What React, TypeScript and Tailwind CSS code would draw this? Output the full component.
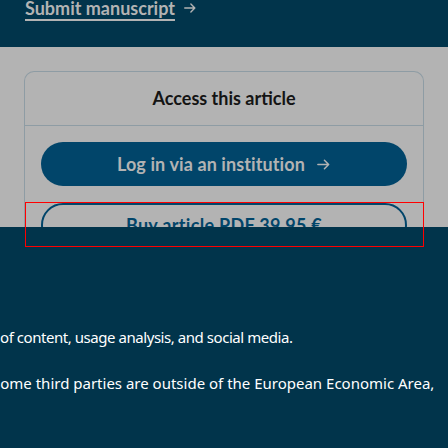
import React from "react";

function Arrow({ className }: { className?: string }) {
  return (
    <svg className={className} viewBox="0 0 16 16" fill="none" stroke="currentColor" strokeWidth="1.6" strokeLinecap="round" strokeLinejoin="round">
      <path d="M2 8h11M9 3.5 13.5 8 9 12.5" />
    </svg>
  );
}

export default function App() {
  return (
    <div className="w-[448px] h-[448px] overflow-hidden bg-[#01344b] relative" style={{ fontFamily: "Lato, 'Noto Sans', sans-serif" }}>
      <div className="h-[47px] bg-[#01344b] pl-[25px] flex items-start">
        <a className="flex items-center gap-[8px] text-[#b3b3b3] text-[18px] font-bold leading-none -mt-[1px]">
          <span className="underline decoration-[1.5px] underline-offset-[4px]">Submit manuscript</span>
          <Arrow className="w-[14px] h-[14px]" />
        </a>
      </div>
      <div className="h-[180px] bg-[#b3b3b3] px-[24px] pt-[24px] overflow-hidden">
        <div className="border border-b-0 border-[#8e9ca4] rounded-t-[10px] h-[200px]">
          <div className="h-[54px] border-b border-[#8e9ca4] flex items-center justify-center">
            <h2 className="text-[18px] font-bold text-[#141414]">Access this article</h2>
          </div>
          <div className="px-[16px] pt-[16px] flex flex-col gap-[17px]">
            <button className="h-[44px] rounded-full bg-[#01456a] text-[#b3b3b3] text-[18px] font-bold tracking-[0.1px] flex items-center justify-center gap-[11px]">
              <span>Log in via an institution</span>
              <Arrow className="w-[15px] h-[15px]" />
            </button>
            <button className="h-[44px] rounded-full border-2 border-[#01456a] text-[#01456a] text-[18px] font-bold tracking-[0.3px] flex items-center justify-center">
              Buy article PDF 39,95 €
            </button>
          </div>
        </div>
      </div>
      <div className="absolute left-[25px] top-[202px] w-[399px] h-[45px] border border-[#ff0000]" />
      <div className="pt-[99px] text-white text-[15px] leading-[23px] whitespace-nowrap" style={{ fontFamily: "'Noto Sans', sans-serif" }}>
        <p className="ml-[0px] tracking-[-0.45px]">of content, usage analysis, and social media.</p>
        <p className="-ml-[8px] mt-[23px]">Some third parties are outside of the European Economic Area,</p>
      </div>
    </div>
  );
}
